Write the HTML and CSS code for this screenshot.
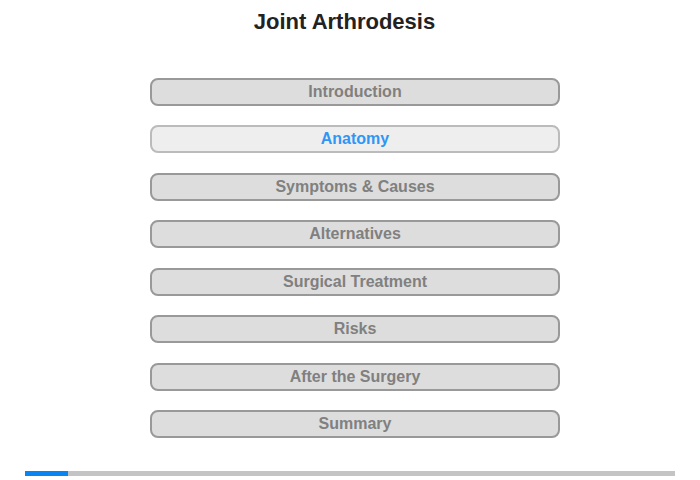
FILE: index.html
```html
<!DOCTYPE html>
<html>
<head>
<meta charset="utf-8">
<link rel="stylesheet" href="styles.css">
</head>
<body>
<div class="page">
  <h1 class="title">Joint Arthrodesis</h1>
  <nav class="menu">
    <div class="item">Introduction</div>
    <div class="item active">Anatomy</div>
    <div class="item">Symptoms &amp; Causes</div>
    <div class="item">Alternatives</div>
    <div class="item">Surgical Treatment</div>
    <div class="item">Risks</div>
    <div class="item">After the Surgery</div>
    <div class="item">Summary</div>
  </nav>
  <div class="progress"><div class="progress-fill"></div></div>
</div>
</body>
</html>
```
FILE: styles.css
```css
html, body {
  margin: 0;
  padding: 0;
  background: #fff;
}
.page {
  width: 700px;
  height: 480px;
  font-family: "Liberation Sans", Arial, sans-serif;
  display: flex;
  flex-direction: column;
}
.title {
  margin: 9px 0 0 0;
  padding-right: 11px;
  text-align: center;
  font-size: 22px;
  line-height: 26px;
  font-weight: bold;
  color: #222;
}
.menu {
  margin: 43px 0 0 150px;
  width: 410px;
  display: flex;
  flex-direction: column;
  gap: 19.43px;
}
.item {
  box-sizing: border-box;
  height: 28px;
  border: 2px solid #999;
  border-radius: 8px;
  background: #dddddd;
  color: #808080;
  font-size: 16px;
  font-weight: bold;
  line-height: 24px;
  text-align: center;
}
.item.active {
  border-color: #bbb;
  background: #eeeeee;
  color: #2f96f5;
}
.progress {
  margin: 33px 0 0 25px;
  width: 650px;
  height: 5px;
  background: #c4c4c4;
}
.progress-fill {
  width: 43px;
  height: 100%;
  background: #0a84f0;
}
```
